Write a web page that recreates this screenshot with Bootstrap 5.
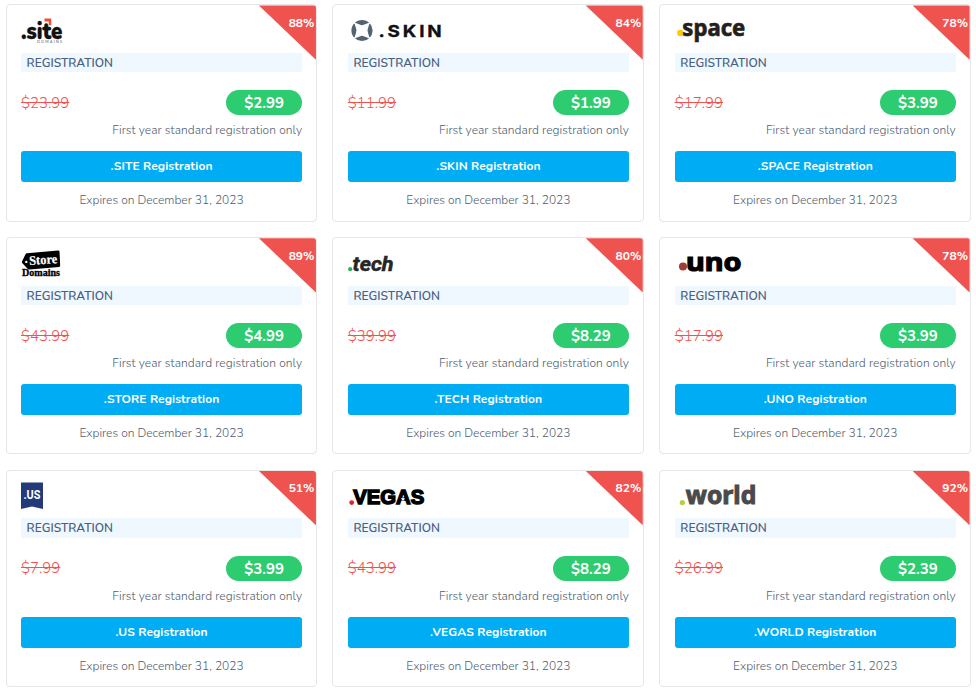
<!DOCTYPE html>
<html lang="en">
<head>
<meta charset="utf-8">
<meta name="viewport" content="width=device-width, initial-scale=1">
<title>Domain registration deals</title>
<link href="https://cdn.jsdelivr.net/npm/bootstrap@5.3.0/dist/css/bootstrap.min.css" rel="stylesheet">
<style>
  body { font-family: Nunito, "Open Sans", "Noto Sans", sans-serif; font-size: 12px; color: #4f5d70; overflow: hidden; }
  .deals { padding: 4.4px 5.4px 0 5.6px; }
  .deals-row { --bs-gutter-x: 15.55px; --bs-gutter-y: 15.6px; }
  .deal { height: 217.2px; border: 1px solid #e6e6e6; border-radius: 4px; padding: 10.6px 13.8px 0 14.4px; overflow: hidden; }
  .logo { display: block; width: 110px; height: 33px; overflow: visible; }
  .kind { height: 19.2px; line-height: 20.7px; margin-top: 3.8px; padding-left: 5.6px; background: #eff8ff; color: #4a6080; font-weight: 600; }
  .prices { height: 25px; margin-top: 18px; }
  .old { color: #ef5350; font-size: 15px; font-weight: 300; padding-top: 1.2px; }
  .now { width: 76px; height: 25px; line-height: 26.2px; border-radius: 13px; background: #2ecc71; font-size: 15px; font-weight: 700; }
  .note { line-height: 18px; margin-top: 6px; font-weight: 300; letter-spacing: .07px; }
  .buy { height: 31px; line-height: 31px; padding: 0; margin-top: 12px; border: 0; border-radius: 3px; background: #00adf5; color: #fff; font-size: 12px; font-weight: 700; letter-spacing: .1px; }
  .ends { line-height: 18px; margin-top: 9px; font-weight: 300; }
  .ribbon { width: 57px; height: 54.4px; background: #ef5350; clip-path: polygon(0 0, 100% 0, 100% 100%); color: #fff; font-weight: 700; line-height: 18px; padding: 8.5px 1.5px 0 0; }
</style>
<script src="https://cdn.jsdelivr.net/npm/bootstrap@5.3.0/dist/js/bootstrap.bundle.min.js"></script>
</head>
<body>
<main class="deals">
<div class="row row-cols-3 deals-row mt-0">

  <div class="col mt-0"><article class="deal position-relative">
    <svg class="logo" viewBox="0 0 110 33" role="img" aria-label=".site domains">
      <text x="0" y="22.6" font-family="Nunito" font-weight="900" font-size="24" fill="#111" stroke="#111" stroke-width=".3" textLength="41.5" lengthAdjust="spacingAndGlyphs">.site</text>
      <path d="M23.5 2.5h6.7v6.8h-2.5V5.5h-4.2z" fill="#f04e30"/>
      <text x="16" y="27" font-family="Lato" font-size="3.6" fill="#555" textLength="25">DOMAINS</text>
    </svg>
    <div class="kind"><span class="k">REGISTRATION</span></div>
    <div class="prices d-flex justify-content-between align-items-center"><del class="old">$23.99</del><span class="now text-white text-center">$2.99</span></div>
    <div class="note text-end"><span>First year standard registration only</span></div>
    <a class="btn buy w-100 d-block" role="button">.SITE Registration</a>
    <div class="ends text-center"><span>Expires on December 31, 2023</span></div>
    <div class="ribbon position-absolute top-0 end-0 text-end">88%</div>
  </article></div>

  <div class="col mt-0"><article class="deal position-relative">
    <svg class="logo" viewBox="0 0 110 33" role="img" aria-label=".skin">
      <circle cx="14" cy="14.5" r="10.6" fill="#536471"/>
      <path d="M8 8.4L11.3 9.5Q14 11 16.7 9.5L20 8.4L19 11.8Q17.6 14.5 19 17.2L20 20.6L16.7 19.5Q14 18 11.3 19.5L8 20.6L9 17.2Q10.4 14.5 9 11.8z" fill="#fff" stroke="#fff" stroke-width="2.2" stroke-linejoin="round"/>
      <path d="M5.6 6L9 9.5M22.4 6L19 9.5M5.6 23L9 19.5M22.4 23L19 19.5" stroke="#fff" stroke-width="1.2"/>
      <text x="30.5" y="20.5" font-family="Inter" font-weight="700" font-size="16" fill="#111" stroke="#111" stroke-width=".3" letter-spacing="2.4" textLength="66" lengthAdjust="spacingAndGlyphs">.SKIN</text>
    </svg>
    <div class="kind"><span class="k">REGISTRATION</span></div>
    <div class="prices d-flex justify-content-between align-items-center"><del class="old">$11.99</del><span class="now text-white text-center">$1.99</span></div>
    <div class="note text-end"><span>First year standard registration only</span></div>
    <a class="btn buy w-100 d-block" role="button">.SKIN Registration</a>
    <div class="ends text-center"><span>Expires on December 31, 2023</span></div>
    <div class="ribbon position-absolute top-0 end-0 text-end">84%</div>
  </article></div>

  <div class="col mt-0"><article class="deal position-relative">
    <svg class="logo" viewBox="0 0 110 33" role="img" aria-label=".space">
      <circle cx="5.3" cy="17" r="3.2" fill="#ffc60b"/>
      <text x="7.3" y="20" font-family="Noto Sans" font-weight="700" font-size="24" fill="#231f20" stroke="#231f20" stroke-width=".7" textLength="63" lengthAdjust="spacingAndGlyphs">space</text>
    </svg>
    <div class="kind"><span class="k">REGISTRATION</span></div>
    <div class="prices d-flex justify-content-between align-items-center"><del class="old">$17.99</del><span class="now text-white text-center">$3.99</span></div>
    <div class="note text-end"><span>First year standard registration only</span></div>
    <a class="btn buy w-100 d-block" role="button">.SPACE Registration</a>
    <div class="ends text-center"><span>Expires on December 31, 2023</span></div>
    <div class="ribbon position-absolute top-0 end-0 text-end">78%</div>
  </article></div>

  <div class="col"><article class="deal position-relative">
    <svg class="logo" viewBox="0 0 110 33" role="img" aria-label="Store Domains">
      <path d="M1 12.6L4.5 5.2Q5 4.3 6 4.2L37.2 1.4Q38.4 1.3 38.5 2.4L39.2 16.6Q39.2 17.8 38 17.9L8.4 20.6Q7.5 20.7 6.8 20L1.4 14.3Q.7 13.5 1 12.6z" fill="#000"/>
      <circle cx="5.3" cy="12.9" r="1.2" fill="#fff"/>
      <g font-family="Liberation Serif" font-weight="700"><text x="8.5" y="16" font-size="13" fill="#fff" stroke="#fff" stroke-width=".2" transform="rotate(-4 8 16)" textLength="28" lengthAdjust="spacingAndGlyphs">Store</text>
      <text x="1" y="27" font-size="9.5" fill="#000" stroke="#000" stroke-width=".3" textLength="38" lengthAdjust="spacingAndGlyphs">Domains</text></g>
    </svg>
    <div class="kind"><span class="k">REGISTRATION</span></div>
    <div class="prices d-flex justify-content-between align-items-center"><del class="old">$43.99</del><span class="now text-white text-center">$4.99</span></div>
    <div class="note text-end"><span>First year standard registration only</span></div>
    <a class="btn buy w-100 d-block" role="button">.STORE Registration</a>
    <div class="ends text-center"><span>Expires on December 31, 2023</span></div>
    <div class="ribbon position-absolute top-0 end-0 text-end">89%</div>
  </article></div>

  <div class="col"><article class="deal position-relative">
    <svg class="logo" viewBox="0 0 110 33" role="img" aria-label=".tech">
      <circle cx="2.2" cy="20.2" r="2.1" fill="#1db954"/>
      <text x="4.6" y="22" font-family="Roboto" font-weight="700" font-style="italic" font-size="20" fill="#262626" stroke="#262626" stroke-width=".5" textLength="41" lengthAdjust="spacingAndGlyphs">tech</text>
    </svg>
    <div class="kind"><span class="k">REGISTRATION</span></div>
    <div class="prices d-flex justify-content-between align-items-center"><del class="old">$39.99</del><span class="now text-white text-center">$8.29</span></div>
    <div class="note text-end"><span>First year standard registration only</span></div>
    <a class="btn buy w-100 d-block" role="button">.TECH Registration</a>
    <div class="ends text-center"><span>Expires on December 31, 2023</span></div>
    <div class="ribbon position-absolute top-0 end-0 text-end">80%</div>
  </article></div>

  <div class="col"><article class="deal position-relative">
    <svg class="logo" viewBox="0 0 110 33" role="img" aria-label=".uno">
      <circle cx="8" cy="17.5" r="4" fill="#a23a38"/>
      <text x="11" y="22" font-family="Noto Sans" font-weight="700" font-size="25.5" fill="#000" stroke="#000" stroke-width="1.2" textLength="55.5" lengthAdjust="spacingAndGlyphs">uno</text>
    </svg>
    <div class="kind"><span class="k">REGISTRATION</span></div>
    <div class="prices d-flex justify-content-between align-items-center"><del class="old">$17.99</del><span class="now text-white text-center">$3.99</span></div>
    <div class="note text-end"><span>First year standard registration only</span></div>
    <a class="btn buy w-100 d-block" role="button">.UNO Registration</a>
    <div class="ends text-center"><span>Expires on December 31, 2023</span></div>
    <div class="ribbon position-absolute top-0 end-0 text-end">78%</div>
  </article></div>

  <div class="col"><article class="deal position-relative">
    <svg class="logo" viewBox="0 0 110 33" role="img" aria-label=".us">
      <path d="M0 .4H22V27L11 24.4L0 27z" fill="#233a78"/>
      <text x="2.4" y="17" font-family="Roboto" font-weight="700" font-size="13" fill="#fff" textLength="17" lengthAdjust="spacingAndGlyphs">.US</text>
    </svg>
    <div class="kind"><span class="k">REGISTRATION</span></div>
    <div class="prices d-flex justify-content-between align-items-center"><del class="old">$7.99</del><span class="now text-white text-center">$3.99</span></div>
    <div class="note text-end"><span>First year standard registration only</span></div>
    <a class="btn buy w-100 d-block" role="button">.US Registration</a>
    <div class="ends text-center"><span>Expires on December 31, 2023</span></div>
    <div class="ribbon position-absolute top-0 end-0 text-end">51%</div>
  </article></div>

  <div class="col"><article class="deal position-relative">
    <svg class="logo" viewBox="0 0 110 33" role="img" aria-label=".vegas">
      <circle cx="3.7" cy="20.6" r="2.4" fill="#e0202c"/>
      <text x="5.3" y="22.4" font-family="Liberation Sans" font-weight="700" font-size="21" fill="#000" stroke="#000" stroke-width="1.5" textLength="71" lengthAdjust="spacingAndGlyphs">VEGAS</text>
      <path d="M55 14.8l.7 1.4 1.5.2-1.1 1 .3 1.5-1.4-.7-1.4.7.3-1.5-1.1-1 1.5-.2z" fill="#fff"/>
    </svg>
    <div class="kind"><span class="k">REGISTRATION</span></div>
    <div class="prices d-flex justify-content-between align-items-center"><del class="old">$43.99</del><span class="now text-white text-center">$8.29</span></div>
    <div class="note text-end"><span>First year standard registration only</span></div>
    <a class="btn buy w-100 d-block" role="button">.VEGAS Registration</a>
    <div class="ends text-center"><span>Expires on December 31, 2023</span></div>
    <div class="ribbon position-absolute top-0 end-0 text-end">82%</div>
  </article></div>

  <div class="col"><article class="deal position-relative">
    <svg class="logo" viewBox="0 0 110 33" role="img" aria-label=".world">
      <circle cx="7.3" cy="20.6" r="2.6" fill="#b2d235"/>
      <text x="10.8" y="22.4" font-family="Noto Sans" font-weight="700" font-size="25" fill="#4a4a4c" stroke="#4a4a4c" stroke-width="1" textLength="70.5" lengthAdjust="spacingAndGlyphs">world</text>
    </svg>
    <div class="kind"><span class="k">REGISTRATION</span></div>
    <div class="prices d-flex justify-content-between align-items-center"><del class="old">$26.99</del><span class="now text-white text-center">$2.39</span></div>
    <div class="note text-end"><span>First year standard registration only</span></div>
    <a class="btn buy w-100 d-block" role="button">.WORLD Registration</a>
    <div class="ends text-center"><span>Expires on December 31, 2023</span></div>
    <div class="ribbon position-absolute top-0 end-0 text-end">92%</div>
  </article></div>

</div>
</main>
</body>
</html>
